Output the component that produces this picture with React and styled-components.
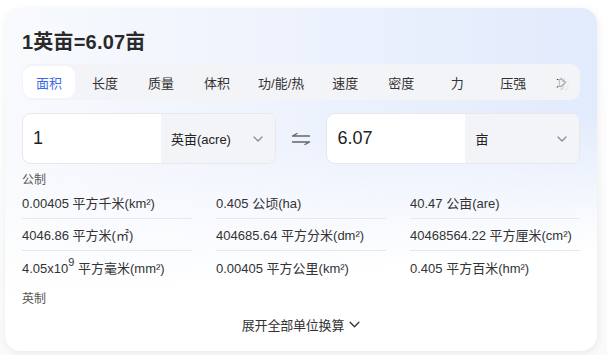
import React from "react";
import styled, { createGlobalStyle } from "styled-components";

const Global = createGlobalStyle`
  html, body { margin: 0; padding: 0; background: #ffffff; }
  body { font-family: "Liberation Sans", "Noto Sans CJK SC", sans-serif; }
  * { box-sizing: border-box; }
`;

const Page = styled.div`
  width: 607px;
  height: 355px;
  padding: 8px 10px 4px 5px;
  background: linear-gradient(to bottom, #ffffff 0%, #fafafa 100%);
`;

const Card = styled.div`
  position: relative;
  height: 343px;
  border-radius: 16px;
  padding: 20px 17px 0 17px;
  background: linear-gradient(175deg, rgba(255,255,255,0) 40%, #ffffff 75%),
    linear-gradient(90deg, #f8fafd 0%, #eef3fd 45%, #e2ebfc 100%);
  background-color: #fff;
  box-shadow: 1px 2px 8px rgba(0, 0, 0, 0.07);
  display: flex;
  flex-direction: column;
`;

const Title = styled.div`
  font-size: 20px;
  line-height: 28px;
  font-weight: 700;
  color: #2a2a2a;
  letter-spacing: 0.2px;
`;

const TabBar = styled.div`
  position: relative;
  margin-top: 8px;
  height: 36px;
  border-radius: 10px;
  background: #f3f4f8;
  overflow: hidden;
  display: flex;
  align-items: center;
  padding: 0 1px;
`;

const TabTrack = styled.div`
  display: flex;
  gap: 4px;
  white-space: nowrap;
`;

const Tab = styled.div`
  min-width: 52px;
  height: 32px;
  padding: 0 ${(p) => (p.$tight ? 11 : 13)}px;
  border-radius: 9px;
  display: flex;
  align-items: center;
  justify-content: center;
  font-size: 13px;
  color: ${(p) => (p.$active ? "#3d6ae6" : "#333")};
  background: ${(p) => (p.$active ? "#ffffff" : "transparent")};
  flex-shrink: 0;
`;

const More = styled.div`
  position: absolute;
  right: 0;
  top: 0;
  bottom: 0;
  width: 22px;
  display: flex;
  align-items: center;
  justify-content: flex-start;
  padding-left: 1px;
  background: linear-gradient(90deg, rgba(243,244,248,0.6) 0%, rgba(243,244,248,0.92) 35%, #f3f4f8 60%);
`;

const InputRow = styled.div`
  margin-top: 13px;
  display: flex;
  align-items: center;
`;

const Field = styled.div`
  width: 254px;
  height: 51px;
  border: 1px solid #e7e8ec;
  border-radius: 9px;
  overflow: hidden;
  display: flex;
  background: #fff;
`;

const Value = styled.div`
  width: ${(p) => p.$w}px;
  padding-left: 10px;
  display: flex;
  align-items: center;
  font-size: 18px;
  color: #222;
`;

const Select = styled.div`
  flex: 1;
  background: #f3f4f8;
  display: flex;
  align-items: center;
  justify-content: space-between;
  padding: 0 12px 0 10px;
  font-size: 13px;
  color: #222;
`;

const Swap = styled.div`
  width: 51px;
  display: flex;
  justify-content: center;
  align-items: center;
`;

const Section = styled.div`
  font-size: 12px;
  line-height: 14px;
  color: #555;
  margin-top: ${(p) => p.$mt}px;
`;

const Grid = styled.div`
  display: grid;
  grid-template-columns: repeat(3, 170px);
  column-gap: 24px;
`;

const Cell = styled.div`
  height: 32px;
  display: flex;
  align-items: center;
  font-size: 13px;
  color: #333;
  white-space: nowrap;
  border-bottom: ${(p) => (p.$last ? "none" : "1px solid #e8e8ec")};
  sup { font-size: 11px; line-height: 0; position: relative; top: -1px; }
`;

const Expand = styled.div`
  margin-top: 9px;
  display: flex;
  justify-content: center;
  align-items: center;
  gap: 5px;
  font-size: 13px;
  color: #333;
  letter-spacing: -0.2px;
`;

const Chevron = ({ color = "#888", w = 10, h = 6 }) => (
  <svg width={w} height={h} viewBox="0 0 10 6" fill="none">
    <path d="M1 1 L5 5 L9 1" stroke={color} strokeWidth="1.2" strokeLinecap="round" strokeLinejoin="round" />
  </svg>
);

const SwapIcon = () => (
  <svg width="20" height="14" viewBox="0 0 20 14" fill="none">
    <path d="M1.5 4 H18.5 M1.5 4 L6 1.5" stroke="#666" strokeWidth="1.4" strokeLinecap="round" strokeLinejoin="round" />
    <path d="M1.5 10 H18.5 M18.5 10 L14 12.5" stroke="#666" strokeWidth="1.4" strokeLinecap="round" strokeLinejoin="round" />
  </svg>
);

const tabs = ["面积", "长度", "质量", "体积", "功/能/热", "速度", "密度", "力", "压强", "功率"];

const rows = [
  [<>0.00405 平方千米(km²)</>, <>0.405 公顷(ha)</>, <>40.47 公亩(are)</>],
  [<>4046.86 平方米(㎡)</>, <>404685.64 平方分米(dm²)</>, <>40468564.22 平方厘米(cm²)</>],
  [<>4.05x10<sup>9</sup> 平方毫米(mm²)</>, <>0.00405 平方公里(km²)</>, <>0.405 平方百米(hm²)</>],
];

export default function App() {
  return (
    <>
      <Global />
      <Page>
        <Card>
          <Title>1英亩=6.07亩</Title>
          <TabBar>
            <TabTrack>
              {tabs.map((t, i) => (
                <Tab key={t} $active={i === 0} $tight={t === "功/能/热"}>{t}</Tab>
              ))}
            </TabTrack>
            <More>
              <svg width="8" height="11" viewBox="0 0 8 11" fill="none">
                <path d="M1.5 1 L6.5 5.5 L1.5 10" stroke="#aaa" strokeWidth="1.1" strokeLinejoin="round" />
              </svg>
            </More>
          </TabBar>
          <InputRow>
            <Field>
              <Value $w={138}>1</Value>
              <Select>
                <span>英亩(acre)</span>
                <Chevron />
              </Select>
            </Field>
            <Swap>
              <SwapIcon />
            </Swap>
            <Field>
              <Value $w={138}>6.07</Value>
              <Select>
                <span>亩</span>
                <Chevron />
              </Select>
            </Field>
          </InputRow>
          <Section $mt={9}>公制</Section>
          <Grid>
            {rows.flatMap((r, ri) =>
              r.map((c, ci) => (
                <Cell key={`${ri}-${ci}`} $last={ri === rows.length - 1}>
                  <span>{c}</span>
                </Cell>
              ))
            )}
          </Grid>
          <Section $mt={9}>英制</Section>
          <Expand>
            <span>展开全部单位换算</span>
            <Chevron color="#333" w={11} h={7} />
          </Expand>
        </Card>
      </Page>
    </>
  );
}
